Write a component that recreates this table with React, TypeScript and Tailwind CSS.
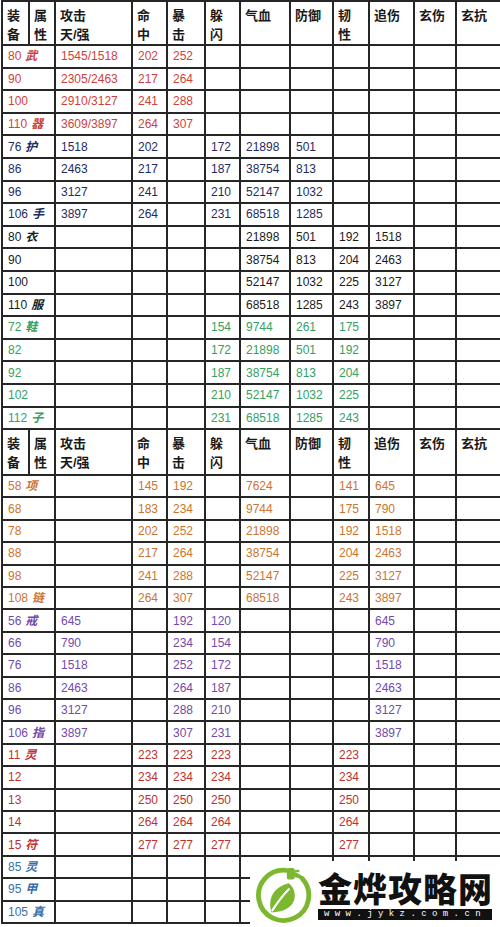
import React from "react";

type Row = { tone: string; label: string; mark?: string; cells: string[] };

// column widths in px, left to right
const widths = ["w-[27px]", "w-[26px]", "w-[77px]", "w-[35px]", "w-[38px]", "w-[35px]", "w-[50px]", "w-[43px]", "w-[36px]", "w-[45px]", "w-[42px]", "w-[45px]"];

const tones: Record<string, string> = {
  red: "text-[#cf3f3b]",
  navy: "text-[#1f2b5e]",
  black: "text-[#1b1b1b]",
  green: "text-[#35a062]",
  orange: "text-[#cc7430]",
  purple: "text-[#7349ac]",
  crimson: "text-[#bd312e]",
  blue: "text-[#3b6fa9]",
};

const e = "";

const topRows: Row[] = [
  { tone: "red", label: "80", mark: "武", cells: ["1545/1518", "202", "252", e, e, e, e, e, e, e] },
  { tone: "red", label: "90", cells: ["2305/2463", "217", "264", e, e, e, e, e, e, e] },
  { tone: "red", label: "100", cells: ["2910/3127", "241", "288", e, e, e, e, e, e, e] },
  { tone: "red", label: "110", mark: "器", cells: ["3609/3897", "264", "307", e, e, e, e, e, e, e] },
  { tone: "navy", label: "76", mark: "护", cells: ["1518", "202", e, "172", "21898", "501", e, e, e, e] },
  { tone: "navy", label: "86", cells: ["2463", "217", e, "187", "38754", "813", e, e, e, e] },
  { tone: "navy", label: "96", cells: ["3127", "241", e, "210", "52147", "1032", e, e, e, e] },
  { tone: "navy", label: "106", mark: "手", cells: ["3897", "264", e, "231", "68518", "1285", e, e, e, e] },
  { tone: "black", label: "80", mark: "衣", cells: [e, e, e, e, "21898", "501", "192", "1518", e, e] },
  { tone: "black", label: "90", cells: [e, e, e, e, "38754", "813", "204", "2463", e, e] },
  { tone: "black", label: "100", cells: [e, e, e, e, "52147", "1032", "225", "3127", e, e] },
  { tone: "black", label: "110", mark: "服", cells: [e, e, e, e, "68518", "1285", "243", "3897", e, e] },
  { tone: "green", label: "72", mark: "鞋", cells: [e, e, e, "154", "9744", "261", "175", e, e, e] },
  { tone: "green", label: "82", cells: [e, e, e, "172", "21898", "501", "192", e, e, e] },
  { tone: "green", label: "92", cells: [e, e, e, "187", "38754", "813", "204", e, e, e] },
  { tone: "green", label: "102", cells: [e, e, e, "210", "52147", "1032", "225", e, e, e] },
  { tone: "green", label: "112", mark: "子", cells: [e, e, e, "231", "68518", "1285", "243", e, e, e] },
];

const bottomRows: Row[] = [
  { tone: "orange", label: "58", mark: "项", cells: [e, "145", "192", e, "7624", e, "141", "645", e, e] },
  { tone: "orange", label: "68", cells: [e, "183", "234", e, "9744", e, "175", "790", e, e] },
  { tone: "orange", label: "78", cells: [e, "202", "252", e, "21898", e, "192", "1518", e, e] },
  { tone: "orange", label: "88", cells: [e, "217", "264", e, "38754", e, "204", "2463", e, e] },
  { tone: "orange", label: "98", cells: [e, "241", "288", e, "52147", e, "225", "3127", e, e] },
  { tone: "orange", label: "108", mark: "链", cells: [e, "264", "307", e, "68518", e, "243", "3897", e, e] },
  { tone: "purple", label: "56", mark: "戒", cells: ["645", e, "192", "120", e, e, e, "645", e, e] },
  { tone: "purple", label: "66", cells: ["790", e, "234", "154", e, e, e, "790", e, e] },
  { tone: "purple", label: "76", cells: ["1518", e, "252", "172", e, e, e, "1518", e, e] },
  { tone: "purple", label: "86", cells: ["2463", e, "264", "187", e, e, e, "2463", e, e] },
  { tone: "purple", label: "96", cells: ["3127", e, "288", "210", e, e, e, "3127", e, e] },
  { tone: "purple", label: "106", mark: "指", cells: ["3897", e, "307", "231", e, e, e, "3897", e, e] },
  { tone: "crimson", label: "11", mark: "灵", cells: [e, "223", "223", "223", e, e, "223", e, e, e] },
  { tone: "crimson", label: "12", cells: [e, "234", "234", "234", e, e, "234", e, e, e] },
  { tone: "crimson", label: "13", cells: [e, "250", "250", "250", e, e, "250", e, e, e] },
  { tone: "crimson", label: "14", cells: [e, "264", "264", "264", e, e, "264", e, e, e] },
  { tone: "crimson", label: "15", mark: "符", cells: [e, "277", "277", "277", e, e, "277", e, e, e] },
  { tone: "blue", label: "85", mark: "灵", cells: [e, e, e, e, e, e, e, e, e, e] },
  { tone: "blue", label: "95", mark: "甲", cells: [e, e, e, e, e, e, e, e, e, e] },
  { tone: "blue", label: "105", mark: "真", cells: [e, e, e, e, e, e, e, e, e, e] },
];

const cell = "border-2 border-[#262626] p-0 pl-[5px] align-middle whitespace-nowrap";
const headCell = "border-2 border-[#262626] p-0 pl-[4px] pt-[4px] align-top font-bold text-[13px] leading-[19px] text-[#1a1a1a]";

const HeaderRow: React.FC<{ tall: string }> = ({ tall }) => (
  <tr className={tall}>
    <td className={headCell}>装<br />备</td>
    <td className={headCell}>属<br />性</td>
    <td className={headCell}>攻击<br />天/强</td>
    <td className={headCell}>命<br />中</td>
    <td className={headCell}>暴<br />击</td>
    <td className={headCell}>躲<br />闪</td>
    <td className={headCell}>气血</td>
    <td className={headCell}>防御</td>
    <td className={headCell}>韧<br />性</td>
    <td className={headCell}>追伤</td>
    <td className={headCell}>玄伤</td>
    <td className={headCell}>玄抗</td>
  </tr>
);

const DataRow: React.FC<{ row: Row; tall: string }> = ({ row, tall }) => (
  <tr className={`${tall} ${tones[row.tone]}`}>
    <td colSpan={2} className={cell}>
      {row.label}
      {row.mark && <span className="ml-[4px] font-bold italic">{row.mark}</span>}
    </td>
    {row.cells.map((c, i) => (
      <td key={i} className={cell}>{c}</td>
    ))}
  </tr>
);

const Logo: React.FC = () => (
  <svg width="58" height="62" viewBox="0 0 60 62">
    {/* ring, open where the cord leaves it */}
    <path d="M33 6.5 A26 26 0 1 0 50 15" fill="none" stroke="#7cb82f" strokeWidth="5" strokeLinecap="round" />
    {/* cord up to the plug */}
    <path d="M50 15 C44 10 40 9 36 10" fill="none" stroke="#7cb82f" strokeWidth="4" strokeLinecap="round" />
    <rect x="34" y="4" width="8" height="12" rx="2" fill="#7cb82f" />
    <rect x="42" y="6" width="5" height="2.5" fill="#7cb82f" />
    <rect x="42" y="11.5" width="5" height="2.5" fill="#7cb82f" />
    {/* leaf */}
    <path d="M18 50 C14 36 20 24 36 20 C46 28 44 44 30 48 C26 49 22 50 18 50 Z" fill="#7cb82f" />
    <path d="M19 48 C24 40 28 34 36 26" fill="none" stroke="#ffffff" strokeWidth="2.2" strokeLinecap="round" />
  </svg>
);

export default function App() {
  return (
    <div className="relative w-[500px] h-[927px] overflow-hidden bg-white font-['Liberation_Sans','Noto_Sans_CJK_SC',sans-serif] text-[12px]">
      <table className="table-fixed border-collapse w-[499px] ml-[1px]">
        <colgroup>
          {widths.map((w, i) => (
            <col key={i} className={w} />
          ))}
        </colgroup>
        <tbody>
          <HeaderRow tall="h-[44px]" />
          {topRows.map((r, i) => (
            <DataRow key={"t" + i} row={r} tall="h-[22.6px]" />
          ))}
          <HeaderRow tall="h-[46px]" />
          {bottomRows.map((r, i) => (
            <DataRow key={"b" + i} row={r} tall="h-[22.4px]" />
          ))}
        </tbody>
      </table>

      {/* site watermark laid over the lower right corner */}
      <div className="absolute left-[250px] top-[861px] w-[250px] h-[66px] bg-white flex items-center gap-[6px] pl-[4px]">
        <Logo />
        <div className="flex flex-col items-start">
          <span className="font-['Noto_Sans_CJK_SC',sans-serif] font-black text-[34px] leading-[38px] tracking-[1px] text-[#111]">
            金烨攻略网
          </span>
          <span className="mt-[2px] w-[174px] h-[11px] overflow-hidden whitespace-nowrap bg-[#111] text-white text-[9px] leading-[11px] pl-[6px] tracking-[5.4px] font-['Liberation_Mono',monospace]">
            www.jykz.com.cn
          </span>
        </div>
      </div>
    </div>
  );
}
